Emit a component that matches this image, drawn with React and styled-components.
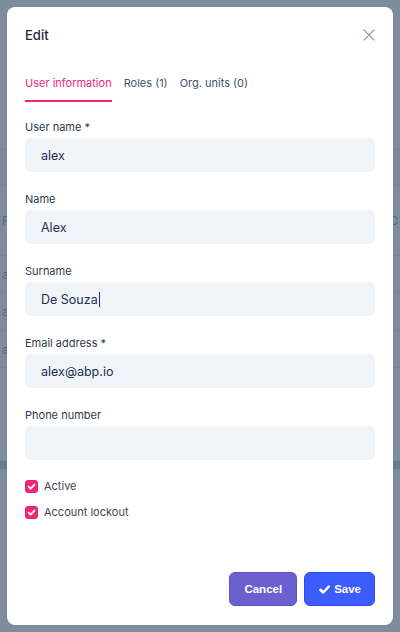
import React from 'react';
import styled, { createGlobalStyle } from 'styled-components';

const GlobalStyle = createGlobalStyle`
  html, body {
    margin: 0;
    padding: 0;
    width: 400px;
    height: 632px;
    overflow: hidden;
    font-family: Inter, "Noto Sans", sans-serif;
  }
  * { box-sizing: border-box; }
`;

const Page = styled.div`
  width: 400px;
  height: 632px;
  background: #ffffff;
  display: flex;
  flex-direction: column;
`;

const PageBand = styled.div`
  height: ${(p) => p.$h}px;
  background: ${(p) => p.$bg || '#ffffff'};
  border-bottom: 1px solid #e7ebef;
  display: flex;
  align-items: center;
  justify-content: space-between;
  padding: 0 2px;
  font-size: 12px;
  color: #8a96a3;
`;

const Overlay = styled.div`
  position: fixed;
  inset: 0;
  background: rgba(62, 86, 108, 0.68);
  padding: 7px;
  display: flex;
`;

const Modal = styled.div`
  flex: 1;
  background: #ffffff;
  border-radius: 8px;
  display: flex;
  flex-direction: column;
  padding: 18px 18px 19px;
`;

const Header = styled.div`
  display: flex;
  align-items: center;
  justify-content: space-between;
  height: 20px;
`;

const Title = styled.h5`
  margin: 0;
  font-size: 13px;
  font-weight: 500;
  color: #1d2939;
`;

const CloseButton = styled.button`
  border: 0;
  background: none;
  padding: 0;
  width: 12px;
  height: 12px;
  display: flex;
  color: #98a4b3;
`;

const Tabs = styled.div`
  display: flex;
  gap: 12px;
  margin-top: 30px;
  margin-bottom: 17px;
`;

const Tab = styled.div`
  font-size: 11px;
  line-height: 16px;
  padding-bottom: 9px;
  color: ${(p) => (p.$active ? '#f0287a' : '#44546a')};
  border-bottom: 2px solid ${(p) => (p.$active ? '#f0287a' : 'transparent')};
`;

const Body = styled.div`
  flex: 1;
  display: flex;
  flex-direction: column;
`;

const Field = styled.div`
  display: flex;
  flex-direction: column;
  margin-bottom: 19px;
`;

const Label = styled.label`
  font-size: 11px;
  line-height: 16px;
  color: #2b3a4c;
  margin-bottom: 3px;
`;

const InputBox = styled.div`
  height: 34px;
  border-radius: 6px;
  background: #f0f3f7;
  padding: 0 16px;
  display: flex;
  align-items: center;
  font-size: 12.5px;
  color: #1c3452;
`;

const Caret = styled.span`
  display: inline-block;
  width: 1px;
  height: 15px;
  background: #1c3452;
  margin-left: 1px;
`;

const Checks = styled.div`
  display: flex;
  flex-direction: column;
  gap: 13px;
  margin-top: 1px;
`;

const CheckRow = styled.label`
  display: flex;
  align-items: center;
  gap: 6px;
  font-size: 11px;
  line-height: 13px;
  color: #3b4858;
`;

const CheckBox = styled.span`
  width: 13px;
  height: 13px;
  border-radius: 3px;
  background: #f0287a;
  border: 1px solid #e21f6e;
  display: flex;
  align-items: center;
  justify-content: center;
`;

const Footer = styled.div`
  display: flex;
  justify-content: flex-end;
  gap: 7px;
`;

const Button = styled.button`
  height: 34px;
  padding: 0 ${(p) => p.$px}px;
  border-radius: 6px;
  border: 1px solid ${(p) => p.$border};
  background: ${(p) => p.$bg};
  color: #ffffff;
  font-family: "Liberation Sans", Arial, sans-serif;
  font-weight: 700;
  font-size: 11.5px;
  display: flex;
  align-items: center;
  gap: 3px;
`;

const fields = [
  { label: 'User name *', value: 'alex' },
  { label: 'Name', value: 'Alex' },
  { label: 'Surname', value: 'De Souza', caret: true },
  { label: 'Email address *', value: 'alex@abp.io' },
  { label: 'Phone number', value: '' },
];

const CheckIcon = ({ size = 9, stroke = 2 }) => (
  <svg width={size} height={size} viewBox="0 0 10 10" fill="none">
    <path d="M1.8 5.2 L4 7.3 L8.3 2.8" stroke="#fff" strokeWidth={stroke} strokeLinecap="round" strokeLinejoin="round" />
  </svg>
);

export default function App() {
  return (
    <>
      <GlobalStyle />
      <Page>
        <PageBand $h={150} $bg="#ffffff" />
        <PageBand $h={36} $bg="#f7f9fb" />
        <PageBand $h={70}>
          <span>R</span>
          <span>C</span>
        </PageBand>
        <PageBand $h={37}>a</PageBand>
        <PageBand $h={38}>a</PageBand>
        <PageBand $h={37}>a</PageBand>
        <PageBand $h={93} />
        <PageBand $h={9} $bg="#c4ccd4" />
      </Page>
      <Overlay>
        <Modal>
          <Header>
            <Title>Edit</Title>
            <CloseButton aria-label="Close">
              <svg width="12" height="12" viewBox="0 0 12 12" fill="none">
                <path d="M1 1 L11 11 M11 1 L1 11" stroke="currentColor" strokeWidth="1.3" strokeLinecap="round" />
              </svg>
            </CloseButton>
          </Header>
          <Tabs>
            <Tab $active>User information</Tab>
            <Tab>Roles (1)</Tab>
            <Tab>Org. units (0)</Tab>
          </Tabs>
          <Body>
            {fields.map((f) => (
              <Field key={f.label}>
                <Label>{f.label}</Label>
                <InputBox role="textbox">
                  {f.value}
                  {f.caret && <Caret />}
                </InputBox>
              </Field>
            ))}
            <Checks>
              <CheckRow>
                <CheckBox><CheckIcon /></CheckBox>
                Active
              </CheckRow>
              <CheckRow>
                <CheckBox><CheckIcon /></CheckBox>
                Account lockout
              </CheckRow>
            </Checks>
          </Body>
          <Footer>
            <Button $bg="#6c5fd0" $border="#5e51c4" $px={14}>Cancel</Button>
            <Button $bg="#3c5cfd" $border="#2d4cf0" $px={13}>
              <CheckIcon size={13} stroke={1.9} />
              Save
            </Button>
          </Footer>
        </Modal>
      </Overlay>
    </>
  );
}
